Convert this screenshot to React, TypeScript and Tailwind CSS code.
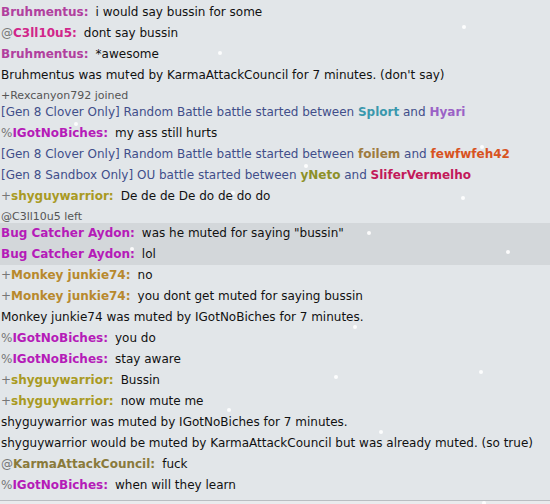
import React from "react";

type Line =
  | { kind: "chat"; sym?: string; name: string; color: string; text: string; hl?: boolean }
  | { kind: "notice"; text: string }
  | { kind: "join"; text: string }
  | { kind: "battle"; format: string; tier: string; p1: string; c1: string; p2: string; c2: string };

const lines: Line[] = [
  { kind: "chat", name: "Bruhmentus", color: "#b1409e", text: "i would say bussin for some" },
  { kind: "chat", sym: "@", name: "C3ll10u5", color: "#d1268a", text: "dont say bussin" },
  { kind: "chat", name: "Bruhmentus", color: "#b1409e", text: "*awesome" },
  { kind: "notice", text: "Bruhmentus was muted by KarmaAttackCouncil for 7 minutes. (don't say)" },
  { kind: "join", text: "+Rexcanyon792 joined" },
  { kind: "battle", format: "Gen 8 Clover Only", tier: "Random Battle", p1: "Splort", c1: "#3a98ad", p2: "Hyari", c2: "#9a62c6" },
  { kind: "chat", sym: "%", name: "IGotNoBiches", color: "#b51bb8", text: "my ass still hurts" },
  { kind: "battle", format: "Gen 8 Clover Only", tier: "Random Battle", p1: "foilem", c1: "#9e7b3f", p2: "fewfwfeh42", c2: "#d8531f" },
  { kind: "battle", format: "Gen 8 Sandbox Only", tier: "OU", p1: "yNeto", c1: "#8d9027", p2: "SliferVermelho", c2: "#c2195a" },
  { kind: "chat", sym: "+", name: "shyguywarrior", color: "#a99a23", text: "De de de De do de do do" },
  { kind: "join", text: "@C3ll10u5 left" },
  { kind: "chat", name: "Bug Catcher Aydon", color: "#b51bb8", text: 'was he muted for saying "bussin"', hl: true },
  { kind: "chat", name: "Bug Catcher Aydon", color: "#b51bb8", text: "lol", hl: true },
  { kind: "chat", sym: "+", name: "Monkey junkie74", color: "#b8892d", text: "no" },
  { kind: "chat", sym: "+", name: "Monkey junkie74", color: "#b8892d", text: "you dont get muted for saying bussin" },
  { kind: "notice", text: "Monkey junkie74 was muted by IGotNoBiches for 7 minutes." },
  { kind: "chat", sym: "%", name: "IGotNoBiches", color: "#b51bb8", text: "you do" },
  { kind: "chat", sym: "%", name: "IGotNoBiches", color: "#b51bb8", text: "stay aware" },
  { kind: "chat", sym: "+", name: "shyguywarrior", color: "#a99a23", text: "Bussin" },
  { kind: "chat", sym: "+", name: "shyguywarrior", color: "#a99a23", text: "now mute me" },
  { kind: "notice", text: "shyguywarrior was muted by IGotNoBiches for 7 minutes." },
  { kind: "notice", text: "shyguywarrior would be muted by KarmaAttackCouncil but was already muted. (so true)" },
  { kind: "chat", sym: "@", name: "KarmaAttackCouncil", color: "#8a7a3b", text: "fuck" },
  { kind: "chat", sym: "%", name: "IGotNoBiches", color: "#b51bb8", text: "when will they learn" },
];

const flakes = [
  [464, 27], [220, 53], [130, 78], [76, 124], [482, 147], [306, 166], [233, 193],
  [463, 198], [369, 233], [132, 249], [508, 252], [355, 327], [336, 377], [481, 372],
  [229, 410], [381, 432], [484, 503],
];

function Row({ line }: { line: Line }) {
  if (line.kind === "join") {
    return (
      <div className="h-[16px] pt-[3px] leading-[13px] text-[11px] text-[#555] pl-px whitespace-nowrap">
        {line.text}
      </div>
    );
  }
  if (line.kind === "notice") {
    return <div className="h-[21px] leading-[21px] pl-px text-[#111] whitespace-nowrap">{line.text}</div>;
  }
  if (line.kind === "battle") {
    return (
      <div className="h-[21px] leading-[21px] pl-px text-[#414e8a] whitespace-nowrap">
        [{line.format}] {line.tier} battle started between{" "}
        <b style={{ color: line.c1 }}>{line.p1}</b> and{" "}
        <b style={{ color: line.c2 }}>{line.p2}</b>
      </div>
    );
  }
  return (
    <div className={`h-[21px] leading-[21px] pl-px whitespace-nowrap ${line.hl ? "bg-[#d3d7da]" : ""}`}>
      {line.sym && <span className="text-[#777]">{line.sym}</span>}
      <b style={{ color: line.color }}>{line.name}:</b>
      <span className="ml-[7px] text-[#111]">{line.text}</span>
    </div>
  );
}

export default function App() {
  return (
    <div
      className="relative w-[550px] h-[504px] overflow-hidden bg-[#e2e6e9] text-[12px] flex flex-col"
      style={{ fontFamily: '"DejaVu Sans", Verdana, sans-serif' }}
    >
      <div className="flex flex-col pt-[2px]">
        {lines.map((l, i) => (
          <Row key={i} line={l} />
        ))}
      </div>
      {/* composer area peeking in under the log */}
      <div className="mt-[4px] flex-1 border-t border-[#b9bdc1] bg-[#e9ebed]" />
      {flakes.map(([x, y], i) => (
        <div
          key={i}
          className="absolute w-[4px] h-[4px] rounded-full bg-white/90"
          style={{ left: x - 2, top: y - 2 }}
        />
      ))}
    </div>
  );
}
